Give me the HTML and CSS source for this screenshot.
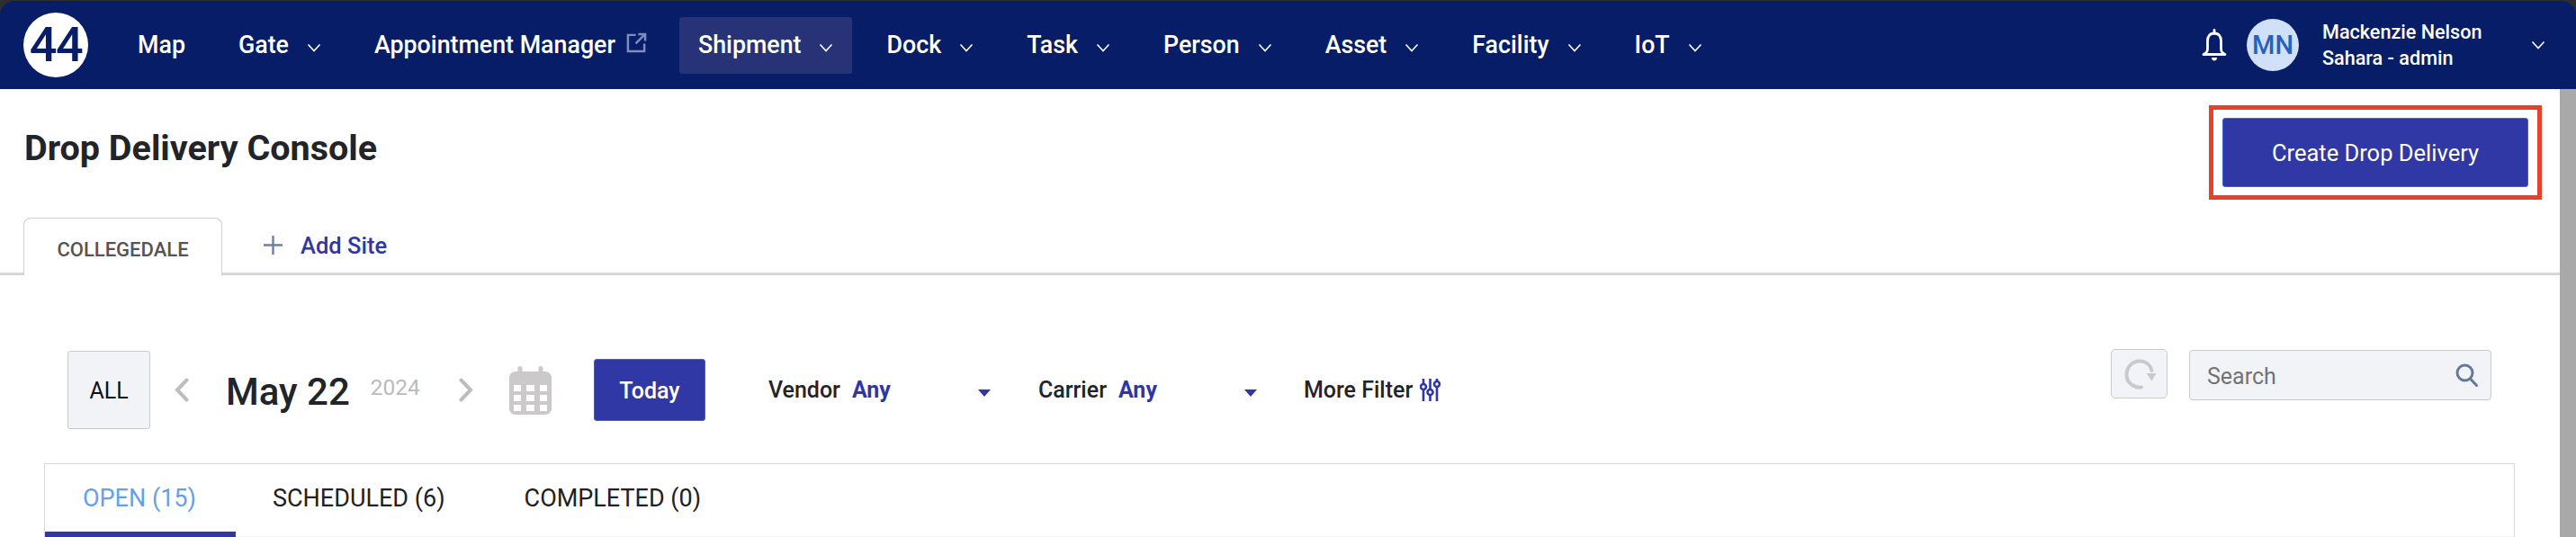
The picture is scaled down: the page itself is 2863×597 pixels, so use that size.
FILE: index.html
```html
<!DOCTYPE html>
<html lang="en">
<head>
<meta charset="utf-8">
<title>Drop Delivery Console</title>
<link rel="stylesheet" href="styles.css">
</head>
<body>
<div class="page">
  <nav class="nav">
    <div class="logo">44</div>
    <ul class="menu">
      <li class="item">Map</li>
      <li class="item">Gate <svg class="chev" viewBox="0 0 16 10"><path d="M1.5 1.5 8 8.5l6.5-7"/></svg></li>
      <li class="item item-ext">Appointment Manager <svg class="ext" viewBox="0 0 24 24"><path d="M11 3H2v19h19v-9M14 2h8v8M22 2 11 13"/></svg></li>
      <li class="item active">Shipment <svg class="chev" viewBox="0 0 16 10"><path d="M1.5 1.5 8 8.5l6.5-7"/></svg></li>
      <li class="item">Dock <svg class="chev" viewBox="0 0 16 10"><path d="M1.5 1.5 8 8.5l6.5-7"/></svg></li>
      <li class="item">Task <svg class="chev" viewBox="0 0 16 10"><path d="M1.5 1.5 8 8.5l6.5-7"/></svg></li>
      <li class="item">Person <svg class="chev" viewBox="0 0 16 10"><path d="M1.5 1.5 8 8.5l6.5-7"/></svg></li>
      <li class="item">Asset <svg class="chev" viewBox="0 0 16 10"><path d="M1.5 1.5 8 8.5l6.5-7"/></svg></li>
      <li class="item">Facility <svg class="chev" viewBox="0 0 16 10"><path d="M1.5 1.5 8 8.5l6.5-7"/></svg></li>
      <li class="item">IoT <svg class="chev" viewBox="0 0 16 10"><path d="M1.5 1.5 8 8.5l6.5-7"/></svg></li>
    </ul>
    <div class="user">
      <svg class="bell" viewBox="0 0 30 36"><path d="M15 5c-5 0-7.500 3.500-7.500 8.500v9c0 3-1.500 4.500-4.500 6h24c-3-1.500-4.500-3-4.500-6v-9C22.500 8.500 20 5 15 5Z"/><path d="M15 1.500V5"/><path class="bell-clap" d="M12 32h6c0 2-1.200 3.500-3 3.500S12 34 12 32Z"/></svg>
      <div class="avatar">MN</div>
      <div class="who"><span>Mackenzie Nelson</span><span>Sahara - admin</span></div>
      <svg class="chev" viewBox="0 0 16 10"><path d="M1.5 1.5 8 8.500l6.500-7"/></svg>
    </div>
  </nav>
  <div class="body">
    <main class="main">
      <header class="head">
        <h1 class="title">Drop Delivery Console</h1>
        <div class="mark"><button class="create">Create Drop Delivery</button></div>
      </header>
      <div class="sites">
        <div class="site">COLLEGEDALE</div>
        <div class="add"><svg class="plus" viewBox="0 0 21 21"><path d="M10.500 0v21M0 10.500h21"/></svg><span>Add Site</span></div>
      </div>
      <div class="toolbar">
        <div class="filters">
          <div class="all">ALL</div>
          <svg class="nav-arrow" viewBox="0 0 16 27"><path d="M13.500 2.500 3 13.500l10.500 11"/></svg>
          <div class="date">May 22</div>
          <div class="year">2024</div>
          <svg class="nav-arrow next" viewBox="0 0 16 27"><path d="M2.500 2.500 13 13.500 2.500 24.500"/></svg>
          <svg class="cal" viewBox="0 0 47 54"><path fill-rule="evenodd" d="M12 0c1.500 0 2.500 1 2.500 2.500V6h18V2.500C32.500 1 33.500 0 35 0s2.500 1 2.500 2.500V6H40c4 0 7 3 7 7v34c0 4-3 7-7 7H7c-4 0-7-3-7-7V13c0-4 3-7 7-7h2.500V2.500C9.500 1 10.500 0 12 0ZM5 21v7h8v-7H5Zm14 0v7h9v-7h-9Zm15 0v7h8v-7h-8ZM5 32v7h8v-7H5Zm14 0v7h9v-7h-9Zm15 0v7h8v-7h-8ZM5 43v7h8v-7H5Zm14 0v7h9v-7h-9Zm15 0v7h8v-7h-8Z"/></svg>
          <button class="today">Today</button>
          <div class="select vendor"><span class="lbl">Vendor</span><span class="val">Any</span><i class="caret"></i></div>
          <div class="select carrier"><span class="lbl">Carrier</span><span class="val">Any</span><i class="caret"></i></div>
          <div class="more"><span class="lbl">More Filter</span><svg class="sliders" viewBox="0 0 23 25"><path d="M4 0v6M4 12v13M11.500 0v12M11.500 18v7M19 0v3M19 9v16"/><circle cx="4" cy="9" r="3"/><circle cx="11.500" cy="15" r="3"/><circle cx="19" cy="6" r="3"/></svg></div>
        </div>
        <div class="tools">
          <button class="refresh"><svg viewBox="0 0 36 36"><path d="M20 32.500C12 33.500 3.500 28 3.500 18.500 3.500 10 10 3.500 18 3.500c7 0 12 4.500 13.500 10.500"/><path class="fill" d="M25.500 17h11l-5 8.500Z"/></svg></button>
          <div class="search"><span>Search</span><svg viewBox="0 0 25 26"><circle cx="10.500" cy="10.500" r="8.500"/><path d="m16.500 17 7 7.500"/></svg></div>
        </div>
      </div>
      <section class="panel">
        <div class="tabs">
          <div class="tab on">OPEN (15)</div>
          <div class="tab">SCHEDULED (6)</div>
          <div class="tab">COMPLETED (0)</div>
        </div>
      </section>
    </main>
    <div class="scrollbar"></div>
  </div>
</div>
</body>
</html>
```
FILE: styles.css
```css
* { box-sizing: border-box; }
html, body { margin: 0; height: 100%; overflow: hidden; }
body { background: #2e2e2e; font-family: Roboto, "Liberation Sans", sans-serif; color: #212529; }
.page { height: 597px; padding-top: 1px; display: flex; flex-direction: column; }

.nav { height: 98px; flex: none; background: #071d68; border-radius: 16px 16px 0 0; display: flex; align-items: center; padding: 0 34px 0 26px; color: #fff; }
.logo { width: 72px; height: 72px; flex: none; border-radius: 50%; background: #fff; color: #071d68; font-size: 54px; font-weight: 500; letter-spacing: -1.500px; line-height: 72px; text-align: center; margin-right: 34px; }
.menu { list-style: none; display: flex; align-items: center; gap: 17px; margin: 0; padding: 0; }
.item { height: 63px; display: flex; align-items: center; gap: 20px; padding: 0 21px; font-size: 26.800px; font-weight: 500; white-space: nowrap; border-radius: 3px; }
.item-ext { gap: 12px; padding-right: 19px; }
.active { background: #273376; }
.chev { width: 16px; height: 10px; flex: none; fill: none; stroke: #fff; stroke-width: 1.6; margin-top: 6px; }
.ext { width: 23px; height: 23px; fill: none; stroke: #7f8cc0; stroke-width: 2.6; margin-top: -6px; }
.user { margin-left: auto; display: flex; align-items: center; }
.bell { width: 30px; height: 36px; fill: none; stroke: #fff; stroke-width: 2.8; stroke-linejoin: round; stroke-linecap: round; margin-right: 21px; }
.bell-clap { fill: #fff; stroke: none; }
.avatar { width: 58px; height: 58px; border-radius: 50%; background: #cfe0f8; color: #2a60b8; font-size: 29px; font-weight: 500; display: flex; align-items: center; justify-content: center; margin-right: 26px; }
.who { display: flex; flex-direction: column; gap: 7px; font-size: 21.600px; font-weight: 500; line-height: 22px; width: 232px; }
.user .chev { margin-top: 0; }

.body { flex: 1; display: flex; min-height: 0; background: #fff; }
.main { flex: 1; min-width: 0; }
.scrollbar { width: 18px; flex: none; background: #a9a9a9; }

.head { display: flex; justify-content: space-between; align-items: center; padding: 18px 20px 0 27px; }
.title { margin: 0 0 11px; font-size: 39.500px; font-weight: 700; }
.mark { border: 5px solid #e8412a; padding: 9px 10px; }
.create { display: block; width: 340px; height: 77px; background: #3038a5; border: 1.5px solid #3a66d0; border-radius: 3px; color: #fff; font: 400 25.500px Roboto, sans-serif; }

.sites { display: flex; align-items: stretch; height: 64px; margin-top: 20px; padding-left: 26px; border-bottom: 3px solid #d6d6d6; }
.site { width: 221px; height: 64px; background: #fff; border: 1.5px solid #cfcfcf; border-bottom: 0; border-radius: 8px 8px 0 0; display: flex; align-items: center; justify-content: center; font-size: 22px; font-weight: 500; color: #555; padding-top: 6px; }
.add { display: flex; align-items: center; gap: 20px; margin-left: 46px; height: 61px; color: #2f37a8; font-size: 25.500px; font-weight: 500; }
.plus { width: 21px; height: 21px; fill: none; stroke: #6d7fa3; stroke-width: 2.4; }

.toolbar { display: flex; justify-content: space-between; margin-top: 82px; padding: 0 76px 0 75px; }
.filters { display: flex; align-items: center; height: 87px; margin-top: 2px; }
.all { width: 92px; height: 87px; background: #f2f3f7; border: 1.5px solid #c9cad0; border-radius: 3px; display: flex; align-items: center; justify-content: center; font-size: 25px; color: #111; padding-top: 2px; }
.nav-arrow { width: 16px; height: 27px; flex: none; fill: none; stroke: #bdbdbd; stroke-width: 4; stroke-linecap: round; margin-left: 27px; }
.date { font-size: 42px; font-weight: 500; margin: 3px 0 0 41px; }
.year { font-size: 24.500px; color: #bbb; margin: -6px 0 0 23px; }
.next { margin-left: 43px; }
.cal { width: 47px; height: 54px; flex: none; fill: #cbc9c9; margin-left: 40px; }
.today { width: 124px; height: 69px; margin-left: 47px; padding-top: 3px; background: #3038a5; border: 1px solid #555ca8; border-radius: 3px; color: #fff; font: 500 25px Roboto, sans-serif; }
.select { display: flex; align-items: center; width: 247px; font-size: 25px; font-weight: 500; position: relative; }
.vendor { margin-left: 70px; width: 300px; }
.carrier { width: 295px; }
.lbl { color: #212529; }
.val { color: #2f37a8; font-weight: 700; margin-left: 13px; }
.caret { position: absolute; top: 50%; margin-top: -1px; width: 0; height: 0; border: 7px solid transparent; border-top: 8px solid #3038a5; border-bottom: 0; }
.vendor .caret { left: 233px; }
.carrier .caret { left: 229px; }
.more { display: flex; align-items: center; gap: 8px; font-size: 25px; font-weight: 500; }
.sliders { width: 23px; height: 25px; fill: none; stroke: #2f37a8; stroke-width: 2.6; }
.sliders circle { fill: #fff; }
.tools { display: flex; gap: 24px; }
.refresh { width: 63px; height: 55px; padding: 0; background: #f2f3f7; border: 1.5px solid #c9cad0; border-radius: 5px; display: flex; align-items: center; justify-content: center; }
.refresh svg { width: 36px; height: 36px; fill: none; stroke: #c9c9c9; stroke-width: 4; stroke-linecap: round; }
.refresh .fill { fill: #c9c9c9; stroke: none; }
.search { width: 336px; height: 56px; margin-top: 1px; background: #f2f3f7; border: 1.5px solid #c9cad0; border-radius: 4px; display: flex; align-items: center; justify-content: space-between; padding: 2px 14px 0 19px; font-size: 25px; color: #737373; }
.search svg { width: 25px; height: 26px; margin-top: -2px; fill: none; stroke: #64779c; stroke-width: 3; stroke-linecap: round; }

.panel { margin: 38px 50px 0 49px; height: 82px; border: 1.5px solid #d8d8d8; border-bottom: 0; }
.tabs { display: flex; height: 81px; border-bottom: 1px solid #f0f0f8; }
.tab { padding: 0 44px; display: flex; align-items: center; font-size: 27px; color: #212121; height: 81px; padding-bottom: 6px; }
.tab.on { color: #64a0ee; border-bottom: 6px solid #3038a5; width: 212px; padding-left: 42px; padding-right: 0; padding-bottom: 0; }
.tab.on + .tab { padding-left: 41px; }
```
